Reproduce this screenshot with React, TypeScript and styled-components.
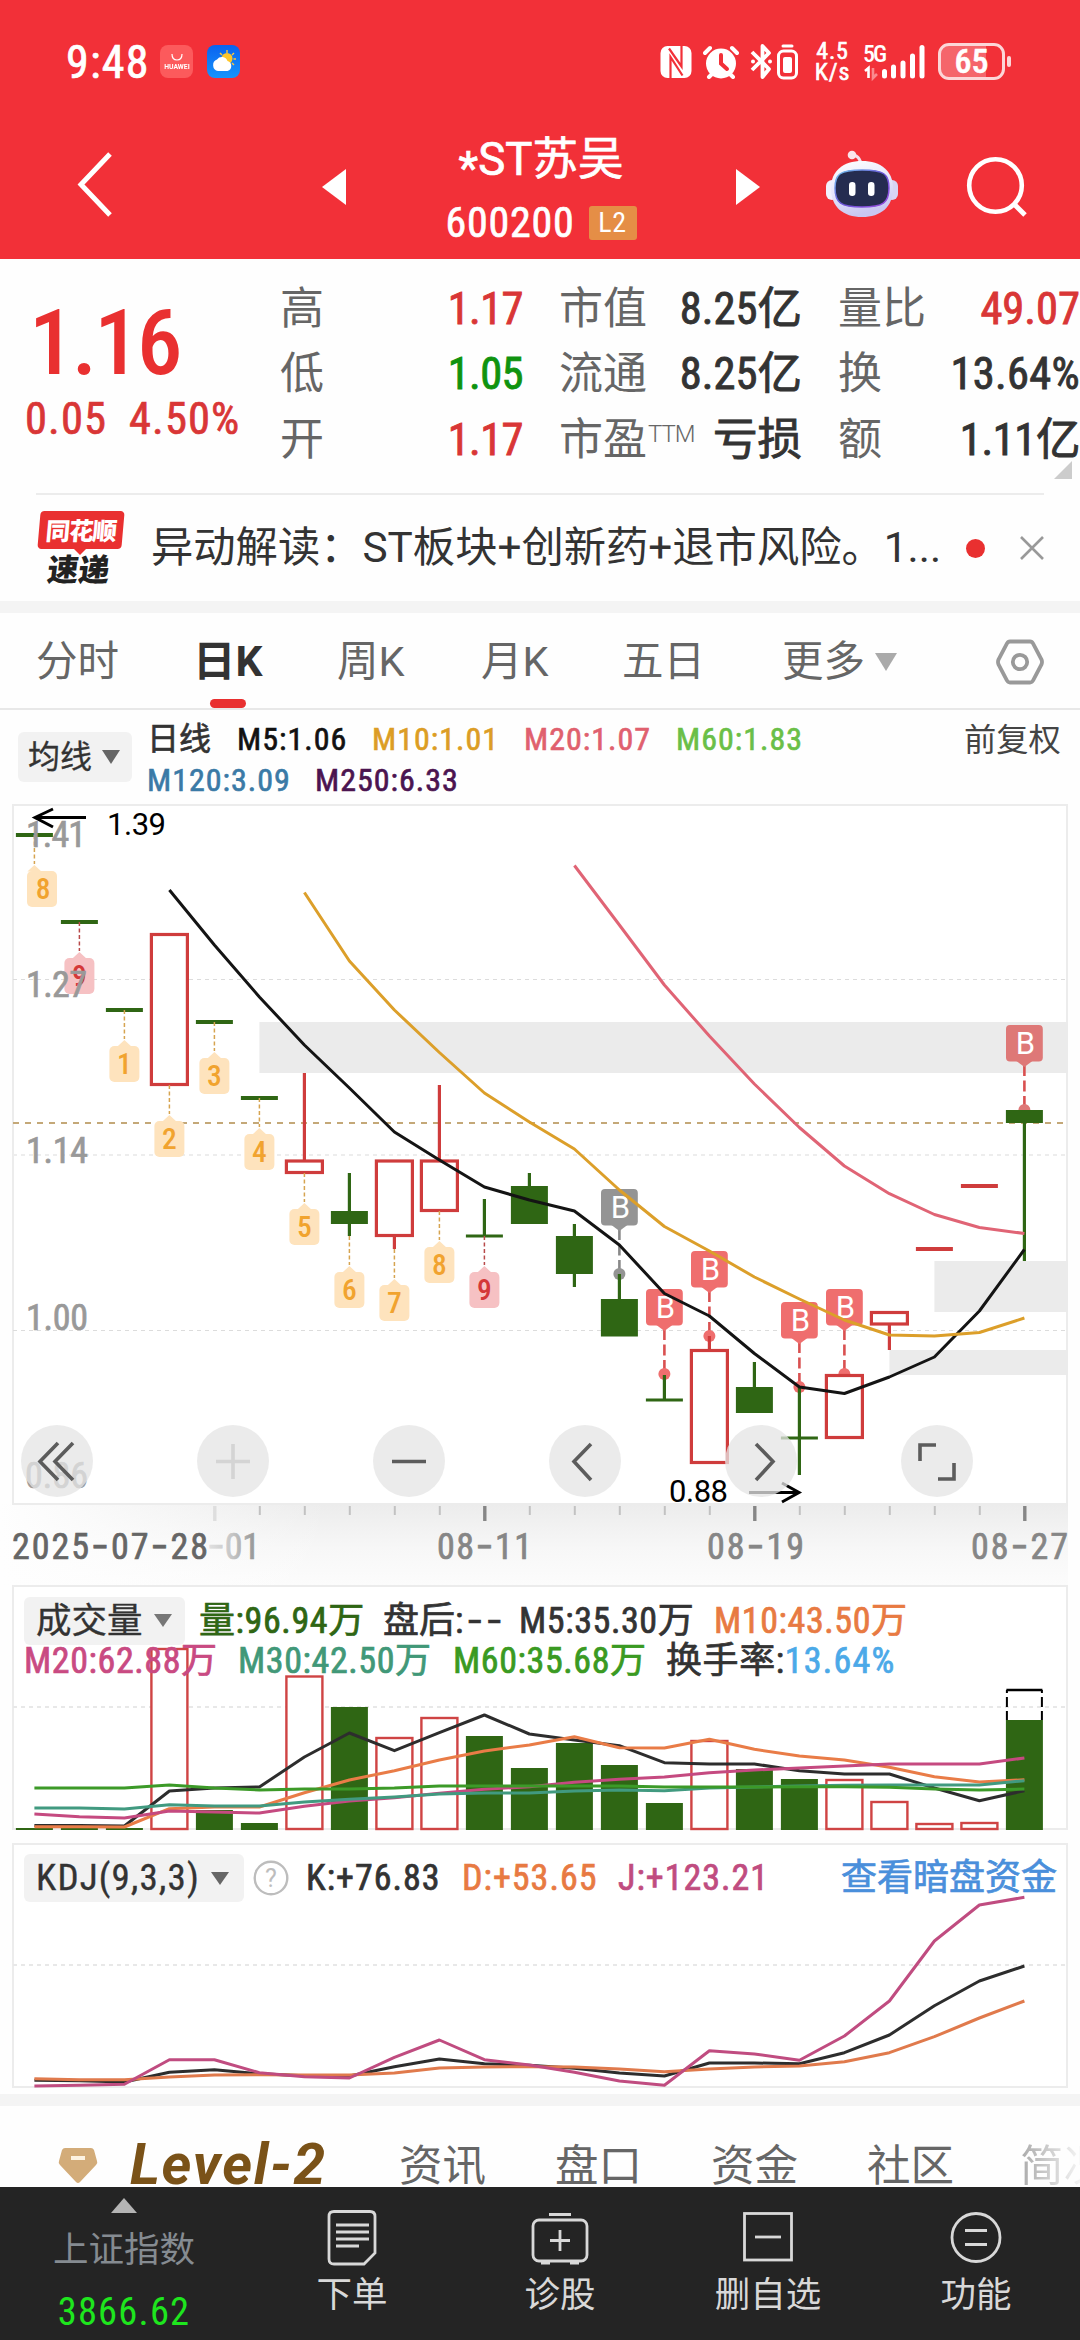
import React from 'react';
import styled, { createGlobalStyle, css } from 'styled-components';

const CJK = '"Noto Sans CJK SC", sans-serif';
const NUM = `"Roboto Condensed", ${CJK}`;
const UI = `Roboto, ${CJK}`;

/* a weight between regular and medium for the figures */
const semi = css`
  -webkit-text-stroke: 0.016em;
`;

const GlobalStyle = createGlobalStyle`
  * { box-sizing: border-box; }
  body { margin: 0; background: #fff; font-family: ${UI}; color: #333; }
  svg { display: block; flex: none; }
`;

const Screen = styled.div`
  width: 1080px;
  height: 2340px;
  overflow: hidden;
  display: flex;
  flex-direction: column;
  background: #fefefe;
`;

/* ---------- header ---------- */

const Header = styled.header`
  flex: none;
  height: 259px;
  background: #f23038;
  color: #fff;
`;

const StatusBar = styled.div`
  height: 123px;
  display: flex;
  align-items: center;
  padding-left: 66px;
`;

const Clock = styled.span`
  width: 94px;
  font: 400 46px/60px ${NUM};
  letter-spacing: 1.2px;
  white-space: nowrap;
  ${semi}
`;

const AppBadge = styled.span<{ $bg: string }>`
  width: 33px;
  height: 33px;
  margin-right: 14px;
  border-radius: 8px;
  background: ${p => p.$bg};
  display: flex;
  flex-direction: column;
  align-items: center;
  justify-content: center;
`;

const BadgeWord = styled.span`
  font: 700 8px/9px ${UI};
  transform: scale(0.85);
`;

const Icon = styled.span<{ $ml: number; $up?: number }>`
  margin-left: ${p => p.$ml}px;
  margin-bottom: ${p => p.$up || 0}px;
`;

const NetSpeed = styled.span`
  margin-left: 16px;
  width: 37px;
  font: 400 24px/21px ${NUM};
  text-align: center;
  letter-spacing: 0.8px;
  -webkit-text-stroke: 0.6px;
`;

const Battery = styled.span`
  margin-left: 11px;
  width: 67px;
  height: 37px;
  border: 3px solid #fcd6d8;
  border-radius: 11px;
  background: linear-gradient(90deg, #f5656b 0 45px, transparent 45px);
  font: 500 34px/31px ${NUM};
  text-align: center;
  ${semi}
`;

const BatteryTip = styled.span`
  margin-left: 2px;
  width: 4px;
  height: 11px;
  border-radius: 2px;
  background: #fcd6d8;
`;

const TitleBar = styled.div`
  height: 135px;
  display: flex;
  align-items: center;
`;

const TitleBlock = styled.div`
  width: 390px;
  display: flex;
  flex-direction: column;
  align-items: center;
`;

const StockName = styled.div`
  height: 64px;
  font: 400 45.5px/64px ${UI};
  white-space: nowrap;
  ${semi}
`;

const Star = styled.span`
  display: inline-block;
  transform: translateY(9px);
`;

const StockCode = styled.div`
  height: 62px;
  display: flex;
  align-items: center;
  gap: 14px;
  font: 400 42px/62px ${NUM};
  letter-spacing: 0.8px;
  ${semi}
`;

const LevelChip = styled.span`
  width: 48px;
  height: 34px;
  border-radius: 3px;
  background: #e58e46;
  font: 400 28px/33px ${NUM};
  text-align: center;
  -webkit-text-stroke: 0;
`;

/* ---------- quote ---------- */

const Quote = styled.section`
  flex: none;
  height: 234px;
  display: grid;
  grid-template-columns: 280px 243px 241px 242px;
  column-gap: 37px;
  padding-top: 17px;
  position: relative;
`;

const PriceBlock = styled.div`
  width: 243px;
  color: #e93030;
  padding: 21px 0 0 25px;
`;

const Price = styled.div`
  height: 92px;
  padding-left: 4px;
  font: 500 91px/92px ${NUM};
  letter-spacing: -2.8px;
`;

const Change = styled.div`
  height: 60px;
  display: flex;
  gap: 22px;
  font: 400 44.5px/60px ${NUM};
  color: #d93636;
  letter-spacing: 1.1px;
  ${semi}
`;

const StatColumn = styled.div<{ $left: number; $right?: number }>`
  margin-left: ${p => p.$left}px;
  margin-right: ${p => p.$right || 37}px;
`;

const StatRow = styled.div`
  height: 65.5px;
  display: flex;
  justify-content: space-between;
  align-items: center;
`;

const StatLabel = styled.span`
  font: 400 44px/60px ${UI};
  color: #666;
  white-space: nowrap;
  sup { font: 300 24px/25px ${UI}; vertical-align: 13px; margin-left: 1px; letter-spacing: -1px; }
`;

const StatValue = styled.span<{ $color?: string; $ls?: number }>`
  font: 400 44.5px/60px ${NUM};
  color: ${p => p.$color || '#333'};
  letter-spacing: ${p => p.$ls || 0}px;
  white-space: nowrap;
  -webkit-text-stroke: 0.02em;
`;

const Corner = styled.span`
  position: absolute;
  right: 8px;
  bottom: 14px;
  border-left: 18px solid transparent;
  border-bottom: 18px solid #ccc;
`;

/* ---------- news strip ---------- */

const NewsStrip = styled.section`
  flex: none;
  height: 108px;
  margin: 0 36px;
  border-top: 2px solid #ececec;
  display: flex;
  align-items: center;
`;

const NewsBadge = styled.div`
  width: 90px;
  margin-bottom: 1px;
  display: flex;
  flex-direction: column;
  align-items: center;
`;

const NewsBadgeTop = styled.span`
  width: 84px;
  height: 38px;
  border-radius: 4px;
  background: #e93030;
  transform: skewX(-5deg);
  color: #fff;
  font: 900 24.5px/37px ${CJK};
  letter-spacing: -1px;
  text-align: center;
`;

const NewsBadgePointer = styled.span`
  margin-right: 2px;
  border: 6px solid transparent;
  border-top-color: #e93030;
  border-bottom: 0;
`;

const NewsBadgeBottom = styled.span`
  margin: -4px 4px 0 0;
  height: 33px;
  color: #222;
  font: 900 31px/33px ${CJK};
  transform: skewX(-7deg);
`;

const NewsText = styled.div`
  margin-left: 25px;
  width: 800px;
  font: 400 42.3px/60px ${UI};
  white-space: nowrap;
`;

const NewsDot = styled.span`
  margin-left: 15px;
  width: 19px;
  height: 19px;
  border-radius: 50%;
  background: #e93030;
`;

const Band = styled.div`
  flex: none;
  height: 12px;
  background: #f4f4f4;
`;

/* ---------- period tabs ---------- */

const Tabs = styled.nav`
  flex: none;
  height: 97px;
  border-bottom: 2px solid #e8e8e8;
  display: grid;
  grid-template-columns: 157px 144px 144px 141px 160px 214px 48px;
  padding-left: 36px;
`;

const Tab = styled.span<{ $active?: boolean }>`
  display: flex;
  align-items: center;
  gap: 10px;
  position: relative;
  font: ${p => (p.$active ? 700 : 400)} ${p => (p.$active ? 42.5 : 41.5)}px/60px ${UI};
  color: ${p => (p.$active ? '#333' : '#666')};
  padding-top: 2px;
`;

const TabMark = styled.span`
  position: absolute;
  left: 17px;
  bottom: 0;
  width: 36px;
  height: 9px;
  border-radius: 5px;
  background: #e93030;
`;

const Caret = styled.span<{ $w: number; $h: number; $color: string }>`
  border: ${p => p.$w / 2}px solid transparent;
  border-top: ${p => p.$h}px solid ${p => p.$color};
  border-bottom: 0;
`;

/* ---------- indicator legends ---------- */

const MaLegend = styled.div`
  flex: none;
  height: 91px;
  display: flex;
  padding-left: 18px;
`;

const Picker = styled.span<{ $w: number; $h: number; $size: number; $gap: number; $mt?: number; $ls?: number }>`
  flex: none;
  width: ${p => p.$w}px;
  height: ${p => p.$h}px;
  margin-top: ${p => p.$mt || 0}px;
  padding-left: ${p => (p.$size > 33 ? 12 : 10)}px;
  border-radius: 6px;
  background: #f2f2f2;
  display: flex;
  align-items: center;
  gap: ${p => p.$gap}px;
  font: 400 ${p => p.$size}px/40px ${NUM};
  letter-spacing: ${p => p.$ls || 0}px;
  white-space: nowrap;
  -webkit-text-stroke: 0.01em;
`;

const MaRows = styled.div`
  margin-left: 15px;
  padding-top: 9px;
  width: 817px;
`;

const Row = styled.div<{ $cols: string; $h: number; $size: number; $ls?: number }>`
  height: ${p => p.$h}px;
  display: grid;
  align-items: center;
  grid-template-columns: ${p => p.$cols};
  font: 400 ${p => p.$size}px/${p => p.$h}px ${NUM};
  letter-spacing: ${p => p.$ls || 0}px;
  white-space: nowrap;
  -webkit-text-stroke: 0.02em;
`;

const Item = styled.span<{ $color?: string; $ls?: number }>`
  color: ${p => p.$color || '#333'};
  letter-spacing: ${p => (p.$ls === undefined ? 'inherit' : p.$ls + 'px')};
  -webkit-text-stroke-color: currentcolor;
`;

const Dashes = styled.span`
  margin-left: 3px;
  font-family: Inter;
  letter-spacing: 3px;
`;

const Adjust = styled.span`
  padding-top: 10px;
  font: 400 32.3px/40px ${UI};
  color: #444;
`;

/* ---------- chart panels ---------- */

const MainPanel = styled.div`
  flex: none;
  height: 784px;
  position: relative;
`;

const Controls = styled.div`
  position: absolute;
  left: 21px;
  top: 624px;
  display: flex;
  gap: 104px;
`;

const RoundButton = styled.button`
  width: 72px;
  height: 72px;
  padding: 0;
  border: 0;
  border-radius: 50%;
  background: rgba(229, 229, 229, 0.76);
`;

const Panel = styled.div<{ $h: number }>`
  flex: none;
  height: ${p => p.$h}px;
  display: grid;
  > * { grid-area: 1 / 1; }
`;

const PanelHead = styled.div<{ $pt: number }>`
  padding: ${p => p.$pt}px 0 0 24px;
  position: relative;
`;

/* ---------- lower tabs and bottom bar ---------- */

const InfoTabs = styled.nav`
  flex: none;
  height: 81px;
  display: grid;
  grid-template-columns: 72px 269px 156px 156px 156px 153px auto;
  padding: 29px 0 0 58px;
  overflow: hidden;
  white-space: nowrap;
`;

const LevelTwo = styled.span`
  font: italic 700 57px/64px ${UI};
  letter-spacing: 1.7px;
  color: #7a5218;
  margin-top: -2px;
`;

const InfoTab = styled.span<{ $fade?: boolean }>`
  font: 400 43.5px/64px ${UI};
  color: ${p => (p.$fade ? 'transparent' : '#666')};
  background: ${p => (p.$fade ? 'linear-gradient(90deg, #aaa, #f4f4f4 60px)' : 'none')};
  background-clip: text;
`;

const BottomBar = styled.footer`
  flex: none;
  height: 153px;
  background: #242424;
  display: grid;
  grid-template-columns: 248px repeat(4, 208px);
`;

const IndexCell = styled.div`
  display: flex;
  flex-direction: column;
  align-items: center;
  padding-top: 11px;
`;

const Up = styled.span`
  border: 13px solid transparent;
  border-bottom: 15px solid #b4b4b4;
  border-top: 0;
`;

const IndexName = styled.span`
  margin-top: 12px;
  font: 400 35.5px/50px ${UI};
  color: #858b91;
`;

const IndexValue = styled.span`
  margin-top: 12px;
  font: 400 38.5px/50px ${NUM};
  color: #1ee61e;
  letter-spacing: 1.2px;
`;

const Action = styled.div`
  display: flex;
  flex-direction: column;
  align-items: center;
  padding-top: 20px;
  font: 400 35.5px/50px ${UI};
  color: #d8d8d8;
  svg { margin-bottom: 3px; }
`;

/* ---------- chart data ---------- */

const X = (i: number) => 34.4 + 45 * i;
const RED = '#cf3c3c';
const GREEN = '#2f6614';

type Candle = { up?: boolean; t: number; b: number; hi?: number; lo?: number };
const candles: Candle[] = [
  { t: 835, b: 835 }, { t: 922, b: 922 }, { t: 1010, b: 1010 }, { up: true, t: 934.5, b: 1084.5 },
  { t: 1022, b: 1022 }, { t: 1098, b: 1098 }, { up: true, t: 1161, b: 1172.5, hi: 1073 },
  { t: 1211, b: 1224, hi: 1173, lo: 1236 }, { up: true, t: 1161, b: 1235.5, lo: 1249 },
  { up: true, t: 1161, b: 1210.5, hi: 1085 }, { t: 1236, b: 1236, hi: 1199 },
  { t: 1186, b: 1224, hi: 1173 }, { t: 1236, b: 1274, hi: 1224, lo: 1287 },
  { t: 1299, b: 1336.5, hi: 1274 }, { t: 1400, b: 1400, hi: 1375 },
  { up: true, t: 1350.5, b: 1462.5, hi: 1336 }, { t: 1387, b: 1413, hi: 1362 },
  { t: 1438, b: 1438, hi: 1387, lo: 1475 }, { up: true, t: 1375.5, b: 1437.5 },
  { up: true, t: 1312.5, b: 1324, lo: 1350 }, { up: true, t: 1249, b: 1249 },
  { up: true, t: 1186, b: 1186 }, { t: 1110, b: 1123, lo: 1261 },
];

const counts = [
  [0, 835, '8'], [1, 922, '9'], [2, 1010, '1'], [3, 1085, '2'], [4, 1022, '3'], [5, 1098, '4'],
  [6, 1173, '5'], [7, 1236, '6'], [8, 1249, '7'], [9, 1211, '8'], [10, 1236, '9'],
] as const;

const signals = [
  [13, 1274, '#949494'], [14, 1374, '#ef6e6e'], [15, 1336, '#ef6e6e'],
  [17, 1387, '#ef6e6e'], [18, 1374, '#ef6e6e'], [22, 1110, '#de7877'],
] as const;

const ma5 = [890, 945, 997, 1045, 1088, 1132, 1160, 1187, 1200, 1211, 1245, 1293.5, 1316, 1353.5, 1387, 1393.5, 1377, 1357, 1311, 1249.5];
const ma10 = [892.5, 961, 1010, 1052.5, 1093, 1122, 1149, 1190, 1226.5, 1251, 1277, 1299, 1320, 1335, 1336, 1332.5, 1318];
const ma20 = [865.5, 925, 985, 1036, 1084, 1127.5, 1166, 1193.7, 1214.5, 1227.5, 1233.5];

const volumes: [number, boolean][] = [
  [1828, false], [1828, false], [1828, false], [1649, true], [1810, false], [1823, false], [1676.5, true],
  [1707, false], [1738, true], [1718, true], [1736, false], [1768, false], [1743, false], [1765, false],
  [1803, false], [1741, true], [1769, false], [1779, false], [1780, true], [1802, true], [1824, true],
  [1823, true], [1720, false],
];
const v5 = [1825.5, 1825.5, 1826, 1791, 1788, 1787, 1757, 1733, 1750.7, 1732.7, 1715, 1734, 1740, 1745.7, 1762.7, 1764, 1764, 1770.7, 1774, 1774, 1788, 1800.7, 1790.7];
const v10 = [1826.7, 1826.7, 1827, 1808.7, 1807, 1807, 1792.7, 1780, 1770.7, 1760, 1751, 1745, 1736.7, 1747.7, 1748, 1739.3, 1749.3, 1756, 1760, 1767.3, 1776.7, 1782, 1779.7];
const v20 = [1814, 1816.7, 1818, 1811, 1812, 1813, 1806.3, 1801, 1797.7, 1793.3, 1789.3, 1786.7, 1782.3, 1779.3, 1777, 1772.7, 1770, 1768, 1766, 1764, 1764, 1764, 1758];
const v30 = [1808, 1808, 1809, 1804.7, 1806, 1806, 1802, 1799.3, 1797, 1794, 1793, 1793, 1791, 1790, 1790.7, 1788, 1787, 1786, 1785.3, 1785, 1785, 1785, 1780.7];
const v60 = [1788, 1788, 1788, 1785, 1788, 1790, 1789, 1789, 1788, 1786, 1786, 1786, 1786, 1786, 1787, 1787, 1787, 1786.7, 1786.7, 1787.3, 1789, 1790, 1789];

const kK = [2080.3, 2080.7, 2082, 2072.3, 2069.7, 2073.7, 2075.7, 2076, 2066.7, 2059, 2063.7, 2065.3, 2068.3, 2073, 2076, 2063, 2063, 2063.7, 2052.7, 2035, 2005.7, 1981, 1966];
const kD = [2078.7, 2079.7, 2079.7, 2077, 2075, 2074.7, 2075, 2075, 2073, 2068, 2067, 2066.7, 2067, 2069, 2071.7, 2069, 2067, 2066, 2061.7, 2052.7, 2036.7, 2018, 2001];
const kJ = [2086, 2085.3, 2084.3, 2059.7, 2059.7, 2072.7, 2076.7, 2078, 2057.3, 2040, 2059.7, 2065, 2072.3, 2081, 2085.3, 2050.7, 2054, 2060.3, 2036, 2001, 1941, 1905, 1897.3];

function Line({ data, from = 0, color, w = 3 }: { data: number[]; from?: number; color: string; w?: number }) {
  return (
    <polyline
      points={data.map((y, i) => `${X(i + from)},${y}`).join(' ')}
      fill="none" stroke={color} strokeWidth={w} strokeLinejoin="round"
    />
  );
}

function CandleShape({ c, i }: { c: Candle; i: number }) {
  const x = X(i);
  const color = c.up ? RED : GREEN;
  const flat = c.t === c.b;
  const wick = c.hi !== undefined || c.lo !== undefined;
  return (
    <g stroke={color} strokeWidth={3.2}>
      {c.hi !== undefined && <line x1={x} x2={x} y1={c.hi} y2={c.t} />}
      {c.lo !== undefined && <line x1={x} x2={x} y1={c.b} y2={c.lo} />}
      {flat ? (
        <line x1={x - 18.5} x2={x + 18.5} y1={c.t} y2={c.t} strokeWidth={wick ? 3 : 4} />
      ) : c.up ? (
        <rect x={x - 18} y={c.t} width={36} height={c.b - c.t} fill="#fff" />
      ) : (
        <rect x={x - 18.5} y={c.t} width={37} height={c.b - c.t} fill={GREEN} stroke="none" />
      )}
    </g>
  );
}

function CountTag({ i, low, label }: { i: number; low: number; label: string }) {
  const x = X(i);
  const cx = i === 0 ? x + 7.6 : x;
  const hot = label === '9';
  return (
    <g>
      <line x1={x} x2={x} y1={low} y2={low + 29} stroke={hot ? '#b84a4a' : '#d6a450'} strokeWidth={1.5} strokeDasharray="4 2.5" />
      <path d={`M${x - 7},${low + 36.5} L${x},${low + 30} L${x + 7},${low + 36.5}Z`} fill={hot ? '#f6c1c3' : '#fee3bd'} />
      <rect x={cx - 15} y={low + 36} width={30} height={36} rx={5} fill={hot ? '#f6c1c3' : '#fee3bd'} />
      <text x={cx + (i === 0 ? 1 : 0)} y={low + 63.5} textAnchor="middle" fontFamily='"Roboto Condensed"' fontSize={29.5} fontWeight={500} fill={hot ? '#d43838' : '#f1a32f'}>{label}</text>
    </g>
  );
}

function SignalTag({ i, y, color }: { i: number; y: number; color: string }) {
  const x = X(i);
  return (
    <g>
      <line x1={x} x2={x} y1={y - 45} y2={y} stroke={color === '#949494' ? '#888' : '#d95050'} strokeWidth={2.6} strokeDasharray="11 4.5" />
      <circle cx={x} cy={y} r={6} fill={color} />
      <rect x={x - 18.4} y={y - 85} width={36.8} height={36.5} rx={4} fill={color} />
      <path d={`M${x - 8},${y - 49} h16 l-8,6z`} fill={color} />
      <text x={x + 1} y={y - 56} textAnchor="middle" fontFamily="Roboto" fontSize={31} fill="#fff">B</text>
    </g>
  );
}

function AxisText({ x, y, w, fill, children }: { x: number; y: number; w: number; fill: string; children: string }) {
  return (
    <text x={x} y={y} textLength={w} fontFamily='"Roboto Condensed"' fontSize={36} fill={fill} stroke={fill} strokeWidth={0.7}>
      {children.split(/(-)/).map((s, k) => (s === '-' ? <tspan key={k} fontFamily="Inter" fontSize={39}>-</tspan> : s))}
    </text>
  );
}

function MainChart() {
  return (
    <svg width="1080" height="784" viewBox="0 801 1080 784">
      <defs>
        <linearGradient id="axisV" x1="0" y1="0" x2="0" y2="1">
          <stop offset="0" stopColor="#ececec" />
          <stop offset="0.55" stopColor="#f7f7f7" />
          <stop offset="1" stopColor="#fcfcfc" />
        </linearGradient>
        <linearGradient id="axisH" gradientUnits="userSpaceOnUse" x1="0" y1="0" x2="330" y2="0">
          <stop offset="0" stopColor="#fefefe" />
          <stop offset="1" stopColor="#fefefe" stopOpacity="0" />
        </linearGradient>
        <linearGradient id="dateFade" gradientUnits="userSpaceOnUse" x1="206" y1="0" x2="260" y2="0">
          <stop offset="0" stopColor="#e4e4e4" />
          <stop offset="0.5" stopColor="#c4c4c4" />
          <stop offset="1" stopColor="#8c8c8c" />
        </linearGradient>
      </defs>
      <rect x="0" y="1504" width="1068" height="81" fill="url(#axisV)" />
      <rect x="0" y="1504" width="330" height="81" fill="url(#axisH)" />
      <rect x="13" y="805" width="1054" height="699" fill="#fff" stroke="#ececec" strokeWidth="2" />
      <g fill="#ebebeb">
        <rect x={X(5)} y="1022" width={1068 - X(5)} height="51" />
        <rect x={X(20)} y="1261" width={1068 - X(20)} height="51" />
        <rect x={X(19)} y="1350" width={1068 - X(19)} height="25" />
      </g>
      <g stroke="#dcdcdc" strokeWidth="1" strokeDasharray="4 4">
        <line x1="13" x2="1066" y1="979.5" y2="979.5" />
        <line x1="13" x2="1066" y1="1330.5" y2="1330.5" />
      </g>
      <line x1="13" x2="1066" y1="1155" y2="1155" stroke="#ededed" strokeWidth="2" strokeDasharray="4 4" />
      <line x1="13" x2="1066" y1="1123" y2="1123" stroke="#c4a878" strokeWidth="2" strokeDasharray="6 6" />
      {signals.map(([i, y, color]) => <SignalTag key={i} i={i} y={y} color={color} />)}
      {candles.map((c, i) => <CandleShape key={i} c={c} i={i} />)}
      {counts.map(([i, low, label]) => <CountTag key={i} i={i} low={low} label={label} />)}
      <Line data={ma5} from={3} color="#141414" />
      <Line data={ma10} from={6} color="#dc9f2a" />
      <Line data={ma20} from={12} color="#e06475" />
      <g fill="none" stroke="#000" strokeWidth="3">
        <path d="M86,817.5 H35 M53,809 L35,817.5 L53,827" />
        <path d="M749,1492.5 H799 M782,1483 L799,1492.5 L782,1502" />
      </g>
      <g fontFamily="Roboto" fontSize="31" fill="#000">
        <text x="107" y="835" textLength="59">1.39</text>
        <text x="669" y="1502" textLength="59">0.88</text>
      </g>
      <g fontFamily='"Roboto Condensed"' fontSize="36" fill="#999" stroke="#999" strokeWidth="0.7">
        <text x="26" y="847" textLength="60">1.41</text>
        <text x="26" y="997" textLength="61">1.27</text>
        <text x="26" y="1163" textLength="62">1.14</text>
        <text x="26" y="1330" textLength="62">1.00</text>
        <text x="25" y="1488" textLength="63">0.86</text>
      </g>
      {Array.from({ length: 19 }, (_, k) => k + 4).map(i => {
        const major = i === 4 || (i - 4) % 6 === 0;
        return (
          <line key={i} x1={X(i) + 0.4} x2={X(i) + 0.4} y1="1506" y2={major ? 1521 : 1515}
            stroke={i === 4 ? '#dedede' : major ? '#868686' : '#c2c2c2'} strokeWidth={major ? 3.4 : 2} />
        );
      })}
      <AxisText x={12} y={1559} w={196} fill="#666">2025-07-28</AxisText>
      <AxisText x={207} y={1559} w={53} fill="url(#dateFade)">-01</AxisText>
      <AxisText x={437} y={1559} w={95} fill="#868686">08-11</AxisText>
      <AxisText x={707} y={1559} w={97} fill="#868686">08-19</AxisText>
      <AxisText x={971} y={1559} w={97} fill="#868686">08-27</AxisText>
    </svg>
  );
}

function VolumeChart() {
  const last = X(22);
  return (
    <svg width="1080" height="258" viewBox="0 1585 1080 258">
      <rect x="13" y="1586" width="1054" height="243" fill="#fff" stroke="#ececec" strokeWidth="2" />
      <line x1="13" x2="1066" y1="1707" y2="1707" stroke="#e8e8e8" strokeWidth="2" strokeDasharray="4 4" />
      {volumes.map(([top, up], i) =>
        up ? (
          <rect key={i} x={X(i) - 18} y={top} width={36} height={1829 - top} fill="#fff" stroke="#cf4444" strokeWidth="2.4" />
        ) : (
          <rect key={i} x={X(i) - 18.5} y={top} width={37} height={1830 - top} fill={GREEN} />
        )
      )}
      <g fill="none" stroke="#000">
        <path d={`M${last - 18},1690 h36`} strokeWidth="2.6" />
        <path d={`M${last - 17.5},1690 V1720 M${last + 17.5},1690 V1720`} strokeWidth="2" strokeDasharray="3 4 10 4 9" />
      </g>
      <Line data={v5} color="#2d2d2d" />
      <Line data={v10} color="#e97c47" />
      <Line data={v20} color="#c54a80" />
      <Line data={v30} color="#419a80" />
      <Line data={v60} color="#3c9a28" />
    </svg>
  );
}

function KdjChart() {
  return (
    <svg width="1080" height="251" viewBox="0 1843 1080 251">
      <rect x="13" y="1844" width="1054" height="243" fill="#fff" stroke="#ececec" strokeWidth="2" />
      <line x1="13" x2="1066" y1="1965" y2="1965" stroke="#e8e8e8" strokeWidth="2" strokeDasharray="4 4" />
      <Line data={kK} color="#2d2d2d" />
      <Line data={kD} color="#e07a4c" />
      <Line data={kJ} color="#c04c80" />
    </svg>
  );
}

const glyphs = [
  <path key="a" d="M37,18 L19,36.500 L37,55 M52,18 L34,36.500 L52,55" stroke="#5c5c5c" />,
  <path key="b" d="M19,36.500 H53 M36,19 V54" stroke="#d4d4d4" />,
  <path key="c" d="M19,36.500 H53" stroke="#5c5c5c" />,
  <path key="d" d="M42,19 L25,36.500 L42,55" stroke="#5c5c5c" />,
  <path key="e" d="M31,19 L48,36.500 L31,55" stroke="#5c5c5c" />,
  <path key="f" d="M19,36 V20 H35 M53,38 V54 H37" stroke="#5c5c5c" />,
];

function Robot() {
  return (
    <svg width="72" height="68" viewBox="825 150 72 68">
      <defs>
        <linearGradient id="shell" x1="0" y1="0" x2="0.3" y2="1">
          <stop offset="0" stopColor="#fff" /><stop offset="0.55" stopColor="#e6e6fb" /><stop offset="1" stopColor="#c9c6f2" />
        </linearGradient>
        <linearGradient id="rim" x1="0" y1="0" x2="1" y2="1">
          <stop offset="0" stopColor="#74c8f0" /><stop offset="0.5" stopColor="#6a55d8" /><stop offset="1" stopColor="#9b4be0" />
        </linearGradient>
      </defs>
      <path d="M851,155 Q861,155 861,173" fill="none" stroke="#f3dfee" strokeWidth="3" />
      <circle cx="851" cy="155" r="4.300" fill="#fbe4ec" />
      <rect x="825" y="180" width="12" height="20" rx="6" fill="#f1f0fc" />
      <rect x="885" y="180" width="12" height="20" rx="6" fill="#d8d4f4" />
      <path d="M861,161 C880,161 892,171 892,188 C892,207 880,217 861,217 C842,217 830,207 830,188 C830,171 842,161 861,161Z" fill="url(#shell)" />
      <path d="M861,170 C883,170 888,174 888,188 C888,203 882,207 861,207 C840,207 834,203 834,188 C834,174 839,170 861,170Z" fill="#252c50" stroke="url(#rim)" strokeWidth="1.500" />
      <rect x="848" y="182" width="6.500" height="14" rx="3.200" fill="#fff" />
      <rect x="867" y="182" width="6.500" height="14" rx="3.200" fill="#fff" />
    </svg>
  );
}

export default function App() {
  return (
    <Screen>
      <GlobalStyle />
      <Header>
        <StatusBar>
          <Clock>9:48</Clock>
          <AppBadge $bg="#fc5a5c">
            <svg width="12" height="9" viewBox="0 0 12 9"><path d="M1,1 Q1,7 6,7 Q11,7 11,1" fill="none" stroke="#fff" strokeWidth="1.200" /></svg>
            <BadgeWord>HUAWEI</BadgeWord>
          </AppBadge>
          <AppBadge $bg="linear-gradient(#0a62f0, #1594fb)">
            <svg width="33" height="33" viewBox="0 0 33 33">
              <g stroke="#ffc83d" strokeWidth="1.400"><path d="M20,5 V8 M27,8 L25,10 M29,14 H26.500 M13,8 L15,10 M27,20 L25,18" /></g>
              <circle cx="20" cy="13.500" r="5.500" fill="#ffc629" />
              <path d="M11,26 a6,6 0 0 1 -1,-11.500 a6,6 0 0 1 10.500,1.500 a5.200,5.200 0 0 1 0,10z" fill="#fff" />
            </svg>
          </AppBadge>
          <Icon $ml={406}>
            <svg width="32" height="34" viewBox="0 0 32 34">
              <rect x="0.500" y="1" width="31" height="32" rx="7" fill="#fff" />
              <path d="M10.500,34 V12 L22.500,30.500 M9,3.500 L21.500,21.500 V0" fill="none" stroke="#f23038" strokeWidth="2.200" />
            </svg>
          </Icon>
          <Icon $ml={11}>
            <svg width="36" height="34" viewBox="0 0 36 34">
              <circle cx="18" cy="18.500" r="15" fill="#fff" />
              <path d="M2,8 L7,3 M34,8 L29,3 M6,32 L9,29 M30,32 L27,29" stroke="#fff" strokeWidth="4" strokeLinecap="round" />
              <path d="M18,10 V18.500 L24,24" fill="none" stroke="#f23038" strokeWidth="4" strokeLinecap="round" />
            </svg>
          </Icon>
          <Icon $ml={11}>
            <svg width="48" height="36" viewBox="0 0 48 36">
              <path d="M2,8 L19,25 L12.500,33 V2 L19,9 L2,26" fill="none" stroke="#fff" strokeWidth="3.800" strokeLinejoin="round" />
              <circle cx="3" cy="17.500" r="2" fill="#fff" /><circle cx="20" cy="17.500" r="2" fill="#fff" />
              <rect x="28.500" y="7" width="18" height="27" rx="5" fill="none" stroke="#fff" strokeWidth="3" />
              <rect x="33" y="13" width="9" height="16" rx="2" fill="#fff" />
              <path d="M33,2 H42" stroke="#fff" strokeWidth="3" strokeLinecap="round" />
            </svg>
          </Icon>
          <NetSpeed>4.5<br />K/s</NetSpeed>
          <Icon $ml={12}>
            <svg width="64" height="36" viewBox="0 0 64 36" overflow="visible">
              <text x="0" y="18" fontFamily='"Roboto Condensed"' fontSize="24" fontWeight="500" fill="#fff" textLength="24">5G</text>
              <path d="M2,27 L5.500,24 V34" fill="none" stroke="#fff" strokeWidth="2.600" />
              <path d="M10,24 V34 L14,30" fill="none" stroke="#fa8a8e" strokeWidth="2.600" />
              <g stroke="#fff" strokeWidth="5" strokeLinecap="round">
                <path d="M21.500,27.500 V32" /><path d="M30.500,23 V32" /><path d="M40,19 V32" /><path d="M49.500,12 V32" /><path d="M59,3.500 V32" />
              </g>
            </svg>
          </Icon>
          <Battery>65</Battery>
          <BatteryTip />
        </StatusBar>
        <TitleBar>
          <Icon $ml={77} $up={11}>
            <svg width="36" height="66" viewBox="0 0 36 66"><path d="M33,2 L4,32.500 L33,63" fill="none" stroke="#fff" strokeWidth="5" /></svg>
          </Icon>
          <Icon $ml={209} $up={7}>
            <svg width="24" height="36" viewBox="0 0 24 36"><path d="M24,0 V36 L0,18Z" fill="#fff" /></svg>
          </Icon>
          <TitleBlock>
            <StockName><Star>*</Star>ST苏吴</StockName>
            <StockCode>600200<LevelChip>L2</LevelChip></StockCode>
          </TitleBlock>
          <Icon $ml={0} $up={7}>
            <svg width="24" height="36" viewBox="0 0 24 36"><path d="M0,0 V36 L24,18Z" fill="#fff" /></svg>
          </Icon>
          <Icon $ml={66} $up={13}><Robot /></Icon>
          <Icon $ml={68} $up={8}>
            <svg width="62" height="62" viewBox="965 156 62 62">
              <circle cx="994.500" cy="185.500" r="26.300" fill="none" stroke="#fff" strokeWidth="4.600" />
              <path d="M1012,203 L1024,215" stroke="#fff" strokeWidth="5" />
            </svg>
          </Icon>
        </TitleBar>
      </Header>

      <Quote>
        <PriceBlock>
          <Price>1.16</Price>
          <Change><span>0.05</span><span>4.50%</span></Change>
        </PriceBlock>
        <StatColumn $left={-37}>
          <StatRow><StatLabel>高</StatLabel><StatValue $ls={-0.6} $color="#d93636">1.17</StatValue></StatRow>
          <StatRow><StatLabel>低</StatLabel><StatValue $ls={-0.6} $color="#0f930f">1.05</StatValue></StatRow>
          <StatRow><StatLabel>开</StatLabel><StatValue $ls={-0.6} $color="#d93636">1.17</StatValue></StatRow>
        </StatColumn>
        <StatColumn $left={-38} $right={36}>
          <StatRow><StatLabel>市值</StatLabel><StatValue>8.25亿</StatValue></StatRow>
          <StatRow><StatLabel>流通</StatLabel><StatValue>8.25亿</StatValue></StatRow>
          <StatRow><StatLabel>市盈<sup>TTM</sup></StatLabel><StatValue>亏损</StatValue></StatRow>
        </StatColumn>
        <StatColumn $left={-37}>
          <StatRow><StatLabel>量比</StatLabel><StatValue $color="#d93636">49.07</StatValue></StatRow>
          <StatRow><StatLabel>换</StatLabel><StatValue $ls={0.3}>13.64%</StatValue></StatRow>
          <StatRow><StatLabel>额</StatLabel><StatValue $ls={-0.4}>1.11亿</StatValue></StatRow>
        </StatColumn>
        <Corner />
      </Quote>

      <NewsStrip>
        <NewsBadge>
          <NewsBadgeTop>同花顺</NewsBadgeTop>
          <NewsBadgePointer />
          <NewsBadgeBottom>速递</NewsBadgeBottom>
        </NewsBadge>
        <NewsText>异动解读：ST板块+创新药+退市风险。1...</NewsText>
        <NewsDot />
        <Icon $ml={35}>
          <svg width="24" height="24" viewBox="0 0 24 24"><path d="M1,1 L23,23 M23,1 L1,23" stroke="#999" strokeWidth="2.600" /></svg>
        </Icon>
      </NewsStrip>
      <Band />

      <Tabs>
        <Tab>分时</Tab>
        <Tab $active>日K<TabMark /></Tab>
        <Tab>周K</Tab>
        <Tab>月K</Tab>
        <Tab>五日</Tab>
        <Tab>更多<Caret $w={22} $h={18} $color="#aaa" /></Tab>
        <Tab>
          <svg width="48" height="46" viewBox="0 0 48 46">
            <path d="M14,2.500 H34 Q36,2.500 37,4.500 L45.500,20.500 Q46.500,23 45.500,25.500 L37,41.500 Q36,43.500 34,43.500 H14 Q12,43.500 11,41.500 L2.500,25.500 Q1.500,23 2.500,20.500 L11,4.500 Q12,2.500 14,2.500Z" fill="none" stroke="#999" strokeWidth="3.800" />
            <circle cx="24" cy="23" r="7.200" fill="none" stroke="#999" strokeWidth="3.800" />
          </svg>
        </Tab>
      </Tabs>

      <MaLegend>
        <Picker $w={114} $h={50} $size={32} $gap={10} $mt={22}>均线<Caret $w={19} $h={14} $color="#666" /></Picker>
        <MaRows>
          <Row $cols="90px 135px 152px 152px auto" $h={41} $size={32} $ls={1}>
            <Item $ls={0}>日线</Item>
            <Item $color="#111">M5:1.06</Item>
            <Item $color="#dc9d24">M10:1.01</Item>
            <Item $color="#e0606e">M20:1.07</Item>
            <Item $color="#6abf47">M60:1.83</Item>
          </Row>
          <Row $cols="168px auto" $h={41} $size={32} $ls={1}>
            <Item $color="#3a7aa6">M120:3.09</Item>
            <Item $color="#4b1450">M250:6.33</Item>
          </Row>
        </MaRows>
        <Adjust>前复权</Adjust>
      </MaLegend>

      <MainPanel>
        <MainChart />
        <Controls>
          {glyphs.map((g, i) => (
            <RoundButton key={i}>
              <svg width="72" height="73" viewBox="0 0 72 73" fill="none" strokeWidth="3.600" strokeLinecap="butt">{g}</svg>
            </RoundButton>
          ))}
        </Controls>
      </MainPanel>

      <Panel $h={258}>
        <VolumeChart />
        <PanelHead $pt={11}>
          <Row $cols="175px 184px 136px 195px auto" $h={48} $size={36} $ls={0.6}>
            <Picker $w={161} $h={48} $size={35.5} $gap={11}>成交量<Caret $w={19} $h={13} $color="#777" /></Picker>
            <Item $color={GREEN}>量:96.94万</Item>
            <Item $ls={0}>盘后:<Dashes>--</Dashes></Item>
            <Item>M5:35.30万</Item>
            <Item $color="#e87a42">M10:43.50万</Item>
          </Row>
          <Row $cols="214px 215px 213px auto" $h={34} $size={36} $ls={0.6}>
            <Item $color="#c94a82">M20:62.88万</Item>
            <Item $color="#419878">M30:42.50万</Item>
            <Item $color="#3a9a22">M60:35.68万</Item>
            <Item>换手率:<Item $color="#4ba9e8" $ls={1.2}>13.64%</Item></Item>
          </Row>
        </PanelHead>
      </Panel>

      <Panel $h={251}>
        <KdjChart />
        <PanelHead $pt={11}>
          <Row $cols="229px 53px 156px 156px 223px auto" $h={48} $size={36} $ls={1}>
            <Picker $w={220} $h={48} $size={37} $gap={11} $ls={1.2}>KDJ(9,3,3)<Caret $w={19} $h={13} $color="#666" /></Picker>
            <svg width="36" height="36" viewBox="0 0 36 36">
              <circle cx="18" cy="18" r="16.300" fill="none" stroke="#bdbdbd" strokeWidth="2.400" />
              <text x="18" y="27" textAnchor="middle" fontFamily="Roboto" fontSize="25" fill="#bdbdbd" letterSpacing="0">?</text>
            </svg>
            <Item>K:+76.83</Item>
            <Item $color="#e87a42">D:+53.65</Item>
            <Item $color="#c04c80">J:+123.21</Item>
            <Item $color="#4a8fdb" $ls={0}>查看暗盘资金</Item>
          </Row>
        </PanelHead>
      </Panel>
      <Band />

      <InfoTabs>
        <svg width="40" height="50" viewBox="0 0 40 50">
          <path d="M7,13 H33 Q35,13 36,15 L39,26 Q40,28 38,30 L22,47 Q20,49 18,47 L2,30 Q0,28 1,26 L4,15 Q5,13 7,13Z" fill="#d3ac79" />
          <rect x="13" y="21" width="14" height="4" fill="#fdf3e2" />
        </svg>
        <LevelTwo>Level-2</LevelTwo>
        <InfoTab>资讯</InfoTab>
        <InfoTab>盘口</InfoTab>
        <InfoTab>资金</InfoTab>
        <InfoTab>社区</InfoTab>
        <InfoTab $fade>简况</InfoTab>
      </InfoTabs>

      <BottomBar>
        <IndexCell>
          <Up />
          <IndexName>上证指数</IndexName>
          <IndexValue>3866.62</IndexValue>
        </IndexCell>
        <Action>
          <svg width="52" height="60" viewBox="0 0 52 60" fill="none" stroke="#d8d8d8" strokeWidth="2.800">
            <path d="M8,4.500 H44 Q49,4.500 49,9.500 V46 L38,57 H8 Q3,57 3,52 V9.500 Q3,4.500 8,4.500Z" />
            <path d="M10,18 H43 M10,25 H43 M10,32 H43 M10,39 H33" />
          </svg>
          下单
        </Action>
        <Action>
          <svg width="60" height="60" viewBox="0 0 60 60" fill="none" stroke="#d8d8d8" strokeWidth="2.800">
            <rect x="3" y="13" width="54" height="41" rx="6" />
            <path d="M19,7.500 H41 M30,23 V44 M20,33.500 H40 M11,56 H20 M40,56 H49" />
          </svg>
          诊股
        </Action>
        <Action>
          <svg width="52" height="60" viewBox="0 0 52 60" fill="none" stroke="#d8d8d8" strokeWidth="2.800">
            <rect x="2.500" y="6.500" width="47" height="46.500" />
            <path d="M13,30 H39" />
          </svg>
          删自选
        </Action>
        <Action>
          <svg width="52" height="60" viewBox="0 0 52 60" fill="none" stroke="#d8d8d8" strokeWidth="2.800">
            <circle cx="26" cy="30.500" r="24" />
            <path d="M15,23.500 H37 M15,37.500 H37" />
          </svg>
          功能
        </Action>
      </BottomBar>
    </Screen>
  );
}
